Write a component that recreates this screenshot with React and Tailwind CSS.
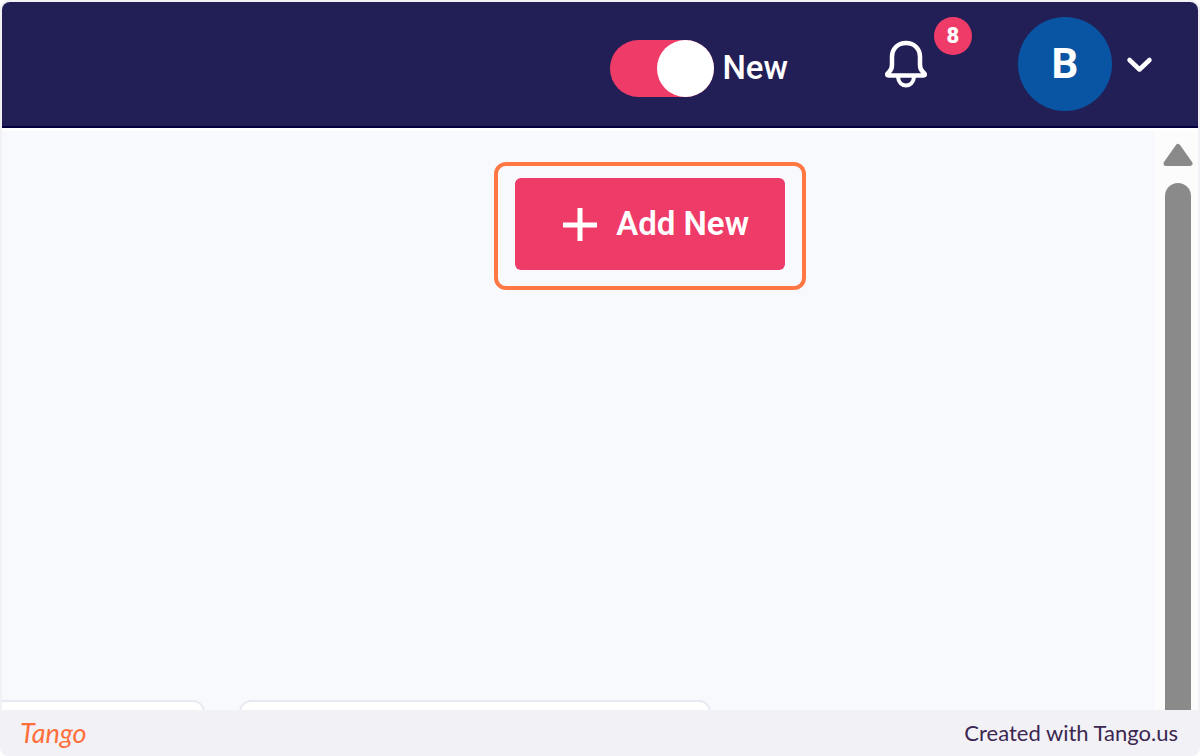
import React, { useState } from "react";

function BellIcon() {
    return (
        <svg
            className="w-11 h-[50px]"
            viewBox="0 0 44 50"
            fill="none"
            stroke="currentColor"
            strokeWidth="4.5"
            strokeLinecap="round"
            strokeLinejoin="round"
            aria-hidden="true"
        >
            <path d="M22 4C13.5 4 8 10 8 18V26C8 30 6.5 32 4.5 33.5C2.3 35.5 2.8 36.5 5 36.5H39C41.2 36.5 41.7 35.5 39.5 33.5C37.5 32 36 30 36 26V18C36 10 30.5 4 22 4Z" />
            <path d="M14 38C14.5 43.5 18 46.5 22 46.5C26 46.5 29.5 43.5 30 38" strokeWidth="4" />
        </svg>
    );
}

function Header() {
    const [isNew, setIsNew] = useState(true);

    return (
        <header className="h-[126px] shrink-0 flex items-center justify-end pr-[42px] bg-[#221f57] border-b-2 border-[#04003f] text-white">
            {/* Version switch */}
            <label className="flex items-center gap-2 mt-2 mr-24 text-[33px] leading-10 font-medium">
                <input
                    type="checkbox"
                    role="switch"
                    checked={isNew}
                    onChange={(e) => setIsNew(e.target.checked)}
                    className="appearance-none flex items-center w-26 h-[57px] rounded-full bg-gray-400 checked:bg-[#ef3b67] checked:justify-end before:block before:size-[57px] before:rounded-full before:bg-white"
                />
                New
            </label>

            {/* Notifications */}
            <button
                type="button"
                aria-label="Notifications"
                className="relative mr-[90px]"
            >
                <BellIcon />
                <span className="absolute -top-[22px] left-[50px] size-[38px] rounded-full bg-[#ef3b67] flex items-center justify-center text-[22px] leading-none font-black">
                    8
                </span>
            </button>

            {/* Profile */}
            <button
                type="button"
                aria-label="Account menu"
                className="flex items-center gap-3"
            >
                <span className="size-[94px] rounded-full bg-[#0955a3] flex items-center justify-center text-[42px] leading-none font-bold">
                    B
                </span>
                <svg
                    className="w-8 h-5"
                    viewBox="0 0 32 20"
                    fill="none"
                    stroke="currentColor"
                    strokeWidth="4.5"
                    strokeLinecap="round"
                    strokeLinejoin="round"
                    aria-hidden="true"
                >
                    <path d="M5.5 6L15.5 15.5L25.5 6" />
                </svg>
            </button>
        </header>
    );
}

function Scrollbar() {
    return (
        <div
            className="w-[43px] shrink-0 flex flex-col items-center gap-4 pt-3 pl-0.5 bg-[#fcfcfc]"
            aria-hidden="true"
        >
            <svg
                className="w-[30px] h-6"
                viewBox="0 0 30 24"
                fill="#8a8a8a"
                stroke="#8a8a8a"
                strokeWidth="5"
                strokeLinejoin="round"
            >
                <path d="M15 3.5L27 20.5H3Z" />
            </svg>
            <div className="w-[26px] flex-1 rounded-t-full bg-[#8a8a8a]"></div>
        </div>
    );
}

export default function App() {
    return (
        <div className="min-h-screen bg-white font-['Roboto',sans-serif]">
            <div className="min-h-screen flex flex-col px-0.5 pt-0.5 rounded-lg bg-[#f2f1f6]">
                <div className="flex-1 flex flex-col rounded-t-lg overflow-hidden">
                    <Header />

                    <div className="flex-1 flex border-t-3 border-white bg-[#f8f9fd]">
                        <main className="flex-1 flex flex-col justify-between">
                            {/* Highlighted action */}
                            <div className="flex justify-end pt-[31px] pr-[349px]">
                                <div className="px-[17px] pt-3 pb-4 border-4 border-[#ff7742] rounded-xl">
                                    <button
                                        type="button"
                                        className="flex items-center gap-[18px] h-[92px] pl-[47px] pr-9 rounded-md bg-[#ef3b67] text-white text-[33px] leading-10 font-semibold"
                                    >
                                        <svg
                                            className="size-9"
                                            viewBox="0 0 36 36"
                                            stroke="currentColor"
                                            strokeWidth="5"
                                            aria-hidden="true"
                                        >
                                            <path d="M18 2V35M1 19H35" />
                                        </svg>
                                        Add New
                                    </button>
                                </div>
                            </div>

                            {/* Tops of the cards below */}
                            <div className="flex gap-[34px] h-2.5 overflow-hidden">
                                <div className="w-[203px] h-10 rounded-tr-xl border-2 border-l-0 border-[#e7eaf3] bg-white"></div>
                                <div className="w-[472px] h-10 rounded-t-xl border-2 border-[#e7eaf3] bg-white"></div>
                            </div>
                        </main>
                        <Scrollbar />
                    </div>
                </div>

                {/* Footer */}
                <footer className="h-[46px] shrink-0 flex items-center justify-between pl-[18px] pr-5">
                    <a
                        href="#"
                        className="font-['Lato',cursive] italic text-[27px] leading-8 text-[#ff6f3a]"
                    >
                        Tango
                    </a>
                    <a
                        href="#"
                        className="font-['Lato',sans-serif] text-[22px] leading-7 text-[#3b2750]"
                    >
                        Created with Tango.us
                    </a>
                </footer>
            </div>
        </div>
    );
}
